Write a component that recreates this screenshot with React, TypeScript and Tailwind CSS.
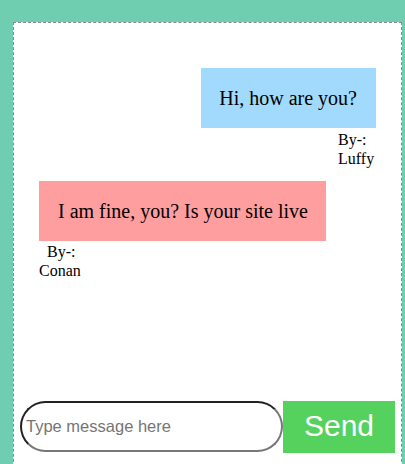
import React, { useState } from 'react';

type Message = {
  id: number;
  text: string;
  author: string;
  mine: boolean;
};

const initialMessages: Message[] = [
  { id: 1, text: 'Hi, how are you?', author: 'Luffy', mine: true },
  { id: 2, text: 'I am fine, you? Is your site live', author: 'Conan', mine: false },
];

export default function App() {
  const [messages, setMessages] = useState<Message[]>(initialMessages);
  const [draft, setDraft] = useState('');

  const handleSend = () => {
    if (!draft.trim()) return;
    setMessages([...messages, { id: Date.now(), text: draft, author: 'Luffy', mine: true }]);
    setDraft('');
  };

  return (
    <div className="h-[464px] overflow-hidden bg-[#6fcdb0] pt-[22px] pl-[13px] pr-[3px] font-['Liberation_Serif',serif]">
      <div className="h-[480px] border border-dashed border-[#888] bg-white flex flex-col">
        {/* Messages */}
        <div className="h-[378px] px-[25px] pt-[45px] flex flex-col gap-[13px]">
          {messages.map((m) =>
            m.mine ? (
              <div key={m.id} className="flex flex-col items-end">
                <div className="bg-[#a1dafc] pl-[18px] pr-[19px] py-[19px] text-[20px] leading-[22px] text-black">
                  {m.text}
                </div>
                <div className="w-[38px] mt-[2px] text-[16px] leading-[19px] text-black">
                  <div>By-:</div>
                  <div>{m.author}</div>
                </div>
              </div>
            ) : (
              <div key={m.id} className="flex flex-col items-start">
                <div className="bg-[#ff9e9e] pl-[19px] pr-[18px] py-[19px] text-[20px] leading-[22px] text-black">
                  {m.text}
                </div>
                <div className="mt-[1px] text-[16px] leading-[19px] text-black">
                  <div className="pl-[8px]">By-:</div>
                  <div>{m.author}</div>
                </div>
              </div>
            )
          )}
        </div>

        {/* Input row */}
        <div className="px-[6px] flex items-start">
          <input
            value={draft}
            onChange={(e) => setDraft(e.target.value)}
            placeholder="Type message here"
            className="w-[263px] h-[51px] rounded-full border-2 border-t-[#222] border-l-[#222] border-r-[#777] border-b-[#777] px-[4px] text-[16.5px] font-['Liberation_Sans',sans-serif] text-black placeholder:text-[#757575] outline-none"
          />
          <button
            onClick={handleSend}
            className="w-[112px] h-[52px] pb-[3px] bg-[#55d15d] text-white text-[30px] font-['Liberation_Sans',sans-serif]"
          >
            Send
          </button>
        </div>
      </div>
    </div>
  );
}
